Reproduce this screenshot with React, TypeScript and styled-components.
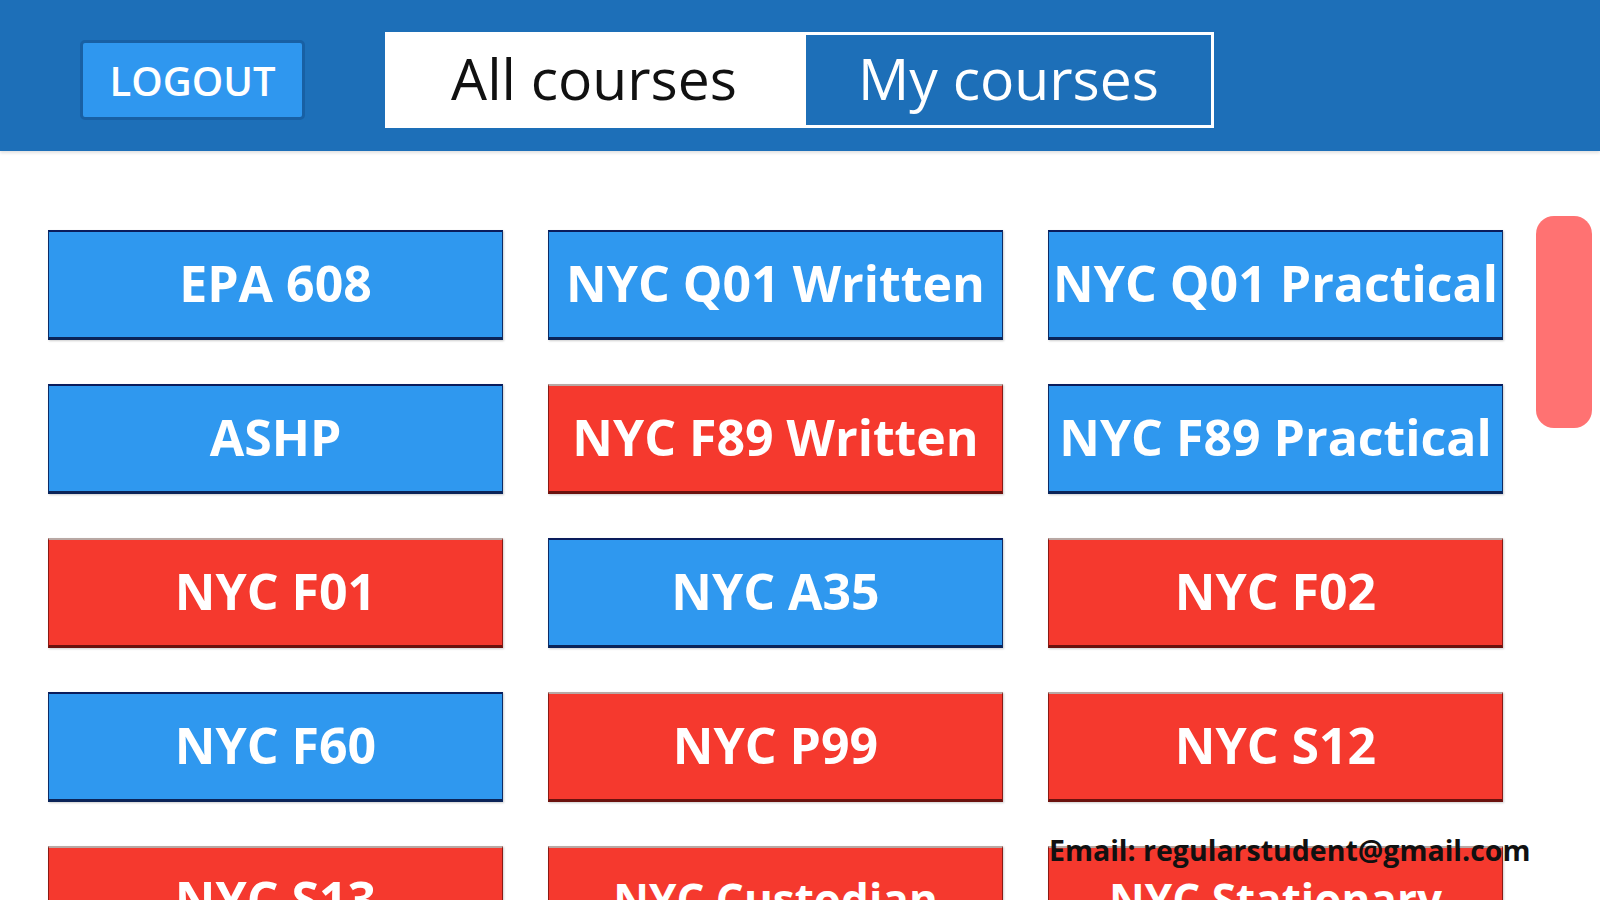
import React from "react";
import styled, { createGlobalStyle } from "styled-components";

const Global = createGlobalStyle`
  html, body { margin: 0; padding: 0; background: #ffffff; }
  body { font-family: "Open Sans", "Noto Sans", sans-serif; overflow: hidden; }
`;

const Page = styled.div`
  position: relative;
  width: 1600px;
  height: 900px;
  overflow: hidden;
  background: #ffffff;
`;

const Header = styled.header`
  height: 151px;
  background: #1d6fb8;
  display: flex;
  align-items: flex-start;
  padding-left: 80px;
  box-sizing: border-box;
  box-shadow: 0 2px 3px rgba(0, 0, 0, 0.12);
`;

const LogoutButton = styled.button`
  margin-top: 40px;
  width: 225px;
  height: 80px;
  box-sizing: border-box;
  background: #2f97ef;
  border: 3px solid #1860a4;
  border-radius: 5px;
  color: #ffffff;
  font-family: "Open Sans", sans-serif;
  font-weight: 600;
  font-size: 40px;
  letter-spacing: 0;
  display: flex;
  align-items: center;
  justify-content: center;
  padding: 0;
`;

const Tabs = styled.div`
  margin-top: 32px;
  margin-left: 80px;
  display: flex;
  height: 96px;
`;

const Tab = styled.div<{ $active?: boolean }>`
  box-sizing: border-box;
  width: ${(p) => (p.$active ? "418px" : "411px")};
  height: 96px;
  display: flex;
  align-items: center;
  justify-content: center;
  font-family: "Open Sans", sans-serif;
  font-size: 57px;
  font-weight: 400;
  background: ${(p) => (p.$active ? "#ffffff" : "#1d6fb8")};
  color: ${(p) => (p.$active ? "#111111" : "#ffffff")};
  border: ${(p) => (p.$active ? "none" : "3px solid #ffffff")};
  padding-bottom: 4px;
`;

const Grid = styled.div`
  display: grid;
  grid-template-columns: repeat(3, 455px);
  column-gap: 45px;
  row-gap: 44px;
  padding: 79px 0 0 48px;
`;

const Card = styled.div<{ $red?: boolean; $small?: boolean }>`
  box-sizing: border-box;
  height: 110px;
  display: flex;
  align-items: center;
  justify-content: center;
  white-space: nowrap;
  background: ${(p) => (p.$red ? "#f5392e" : "#2f98ef")};
  border: 1px solid ${(p) => (p.$red ? "#8a1a14" : "#0d2c66")};
  border-top: 2px solid ${(p) => (p.$red ? "#b8a8a4" : "#0a1c5c")};
  border-bottom: 3px solid ${(p) => (p.$red ? "#6a120e" : "#0b2458")};
  box-shadow: 1px 1px 2px rgba(0, 0, 0, 0.2);
  color: #ffffff;
  font-family: "Open Sans", sans-serif;
  font-weight: 700;
  font-size: ${(p) => (p.$small ? "44px" : "50px")};
  padding-bottom: 4px;
`;

const ScrollThumb = styled.div`
  position: absolute;
  left: 1536px;
  top: 216px;
  width: 56px;
  height: 212px;
  border-radius: 18px;
  background: #ff7272;
`;

const Email = styled.div`
  position: absolute;
  left: 1049px;
  top: 831px;
  font-family: "Open Sans", sans-serif;
  font-weight: 700;
  font-size: 28.5px;
  color: #111111;
  white-space: nowrap;
`;

const courses: { name: string; red?: boolean; small?: boolean }[] = [
  { name: "EPA 608" },
  { name: "NYC Q01 Written" },
  { name: "NYC Q01 Practical" },
  { name: "ASHP" },
  { name: "NYC F89 Written", red: true },
  { name: "NYC F89 Practical" },
  { name: "NYC F01", red: true },
  { name: "NYC A35" },
  { name: "NYC F02", red: true },
  { name: "NYC F60" },
  { name: "NYC P99", red: true },
  { name: "NYC S12", red: true },
  { name: "NYC S13", red: true },
  { name: "NYC Custodian", red: true, small: true },
  { name: "NYC Stationary", red: true, small: true },
];

export default function App() {
  return (
    <Page>
      <Global />
      <Header>
        <LogoutButton>LOGOUT</LogoutButton>
        <Tabs>
          <Tab $active>All courses</Tab>
          <Tab>My courses</Tab>
        </Tabs>
      </Header>
      <Grid>
        {courses.map((c) => (
          <Card key={c.name} $red={c.red} $small={c.small}>
            {c.name}
          </Card>
        ))}
      </Grid>
      <ScrollThumb />
      <Email>Email: regularstudent@gmail.com</Email>
    </Page>
  );
}
